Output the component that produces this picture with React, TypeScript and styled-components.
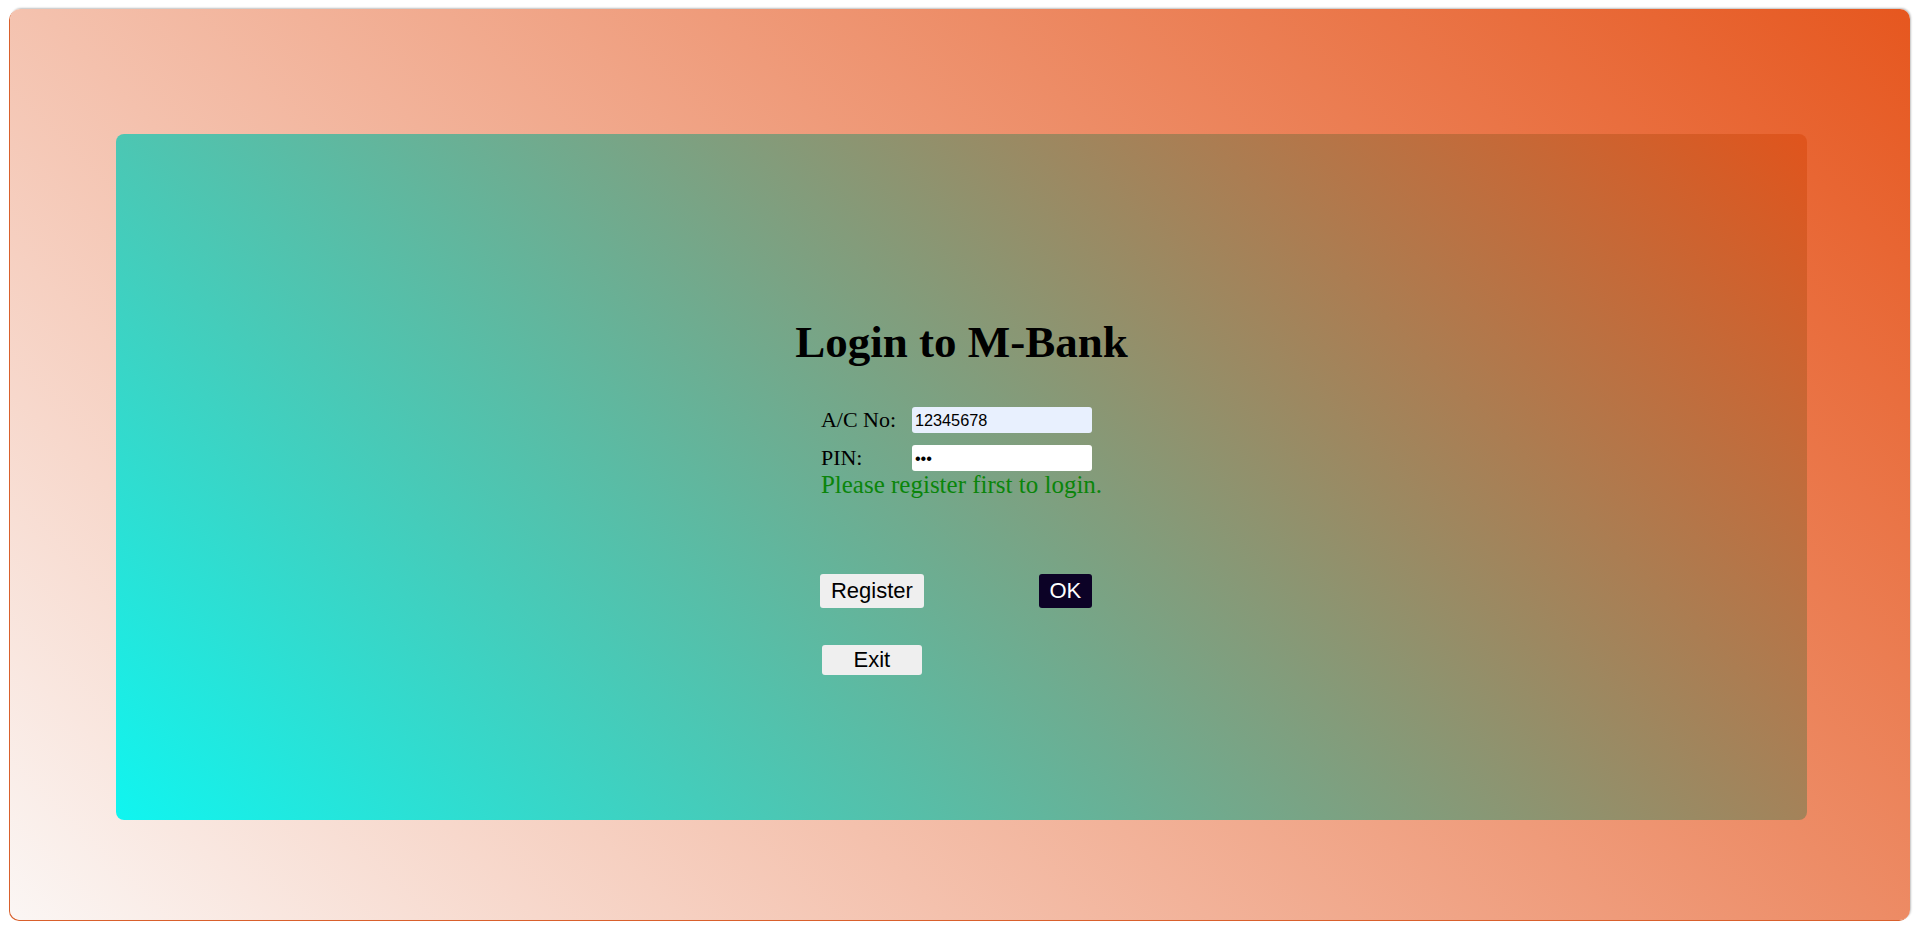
import React from "react";
import styled, { createGlobalStyle } from "styled-components";

const GlobalStyle = createGlobalStyle`
  html, body {
    margin: 0;
    padding: 0;
    background: #ffffff;
  }
  body {
    font-family: "Liberation Serif", "Times New Roman", serif;
  }
`;

const Page = styled.div`
  padding: 9px 5px 16px 10px;
`;

const Frame = styled.div`
  height: 911px;
  box-sizing: border-box;
  padding: 125px 103px 0 106px;
  border-radius: 10px;
  background: linear-gradient(45deg, #fbf6f4 0%, #e6571f 100%);
  box-shadow: -1px 1px 0 0 #d9602c, 1px -1px 2px rgba(0, 0, 0, 0.25);
`;

const Card = styled.div`
  height: 686px;
  box-sizing: border-box;
  padding-top: 182px;
  border-radius: 8px;
  background: linear-gradient(45deg, #10f5f0 0%, #e0541c 100%);
  display: flex;
  flex-direction: column;
  align-items: center;
`;

const Title = styled.h1`
  margin: 0;
  font-size: 45px;
  line-height: 52px;
  font-weight: bold;
  color: #000;
`;

const Form = styled.form`
  margin-top: 39px;
  display: flex;
  flex-direction: column;
  align-items: flex-start;
`;

const Fields = styled.div`
  display: grid;
  grid-template-columns: 91px 180px;
  row-gap: 12px;
  align-items: center;
`;

const Label = styled.label`
  font-size: 22px;
  line-height: 26px;
  color: #000;
`;

const Input = styled.input<{ $filled?: boolean }>`
  width: 180px;
  height: 26px;
  box-sizing: border-box;
  border: none;
  outline: none;
  border-radius: 3px;
  padding: 0 3px;
  font-family: "Liberation Sans", Arial, sans-serif;
  font-size: 16.3px;
  color: #000;
  background: ${(p) => (p.$filled ? "#e8f0fe" : "#ffffff")};
`;

const Message = styled.p`
  margin: 0;
  font-size: 25px;
  line-height: 27px;
  color: #0a850a;
  white-space: nowrap;
`;

const Actions = styled.div`
  margin-top: 76px;
  width: 272px;
  display: grid;
  grid-template-columns: 104px 1fr;
  row-gap: 37px;
  justify-items: center;
  margin-left: -1px;
`;

const Button = styled.button<{ $dark?: boolean }>`
  height: 34px;
  border: none;
  border-radius: 3px;
  padding: 0 11px;
  font-family: "Liberation Sans", Arial, sans-serif;
  font-size: 22px;
  cursor: pointer;
  color: ${(p) => (p.$dark ? "#ffffff" : "#000000")};
  background: ${(p) => (p.$dark ? "#0c0226" : "#efefef")};
`;

const OkButton = styled(Button)`
  justify-self: end;
  width: 53px;
  padding: 0;
`;

const ExitButton = styled(Button)`
  width: 100px;
  height: 30px;
  padding: 0;
`;

export default function App() {
  return (
    <>
      <GlobalStyle />
      <Page>
        <Frame>
          <Card>
            <Title>Login to M-Bank</Title>
            <Form onSubmit={(e) => e.preventDefault()}>
              <Fields>
                <Label htmlFor="acno">A/C No:</Label>
                <Input id="acno" $filled defaultValue="12345678" />
                <Label htmlFor="pin">PIN:</Label>
                <Input id="pin" type="password" defaultValue="123" />
              </Fields>
              <Message>Please register first to login.</Message>
              <Actions>
                <Button type="button">Register</Button>
                <OkButton type="submit" $dark>
                  OK
                </OkButton>
                <ExitButton type="button">Exit</ExitButton>
              </Actions>
            </Form>
          </Card>
        </Frame>
      </Page>
    </>
  );
}
